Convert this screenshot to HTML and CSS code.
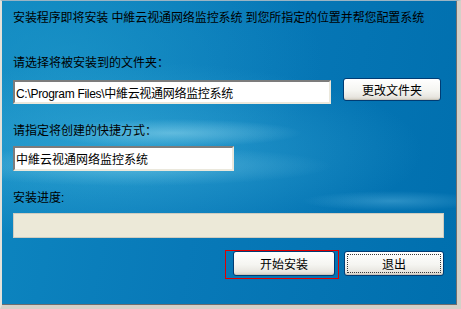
FILE: index.html
```html
<!DOCTYPE html>
<html lang="zh-CN">
<head>
    <meta charset="UTF-8">
    <title>安装</title>
    <link rel="stylesheet" href="styles.css">
</head>
<body>
    <div class="setup-window">
        <p class="intro">安装程序即将安装 中維云视通网络监控系统 到您所指定的位置并帮您配置系统</p>

        <label class="field-label" for="installPath">请选择将被安装到的文件夹：</label>
        <div class="path-row">
            <input type="text" id="installPath" class="text-box path-box" value="C:\Program Files\中維云视通网络监控系统">
            <button class="btn btn-browse">更改文件夹</button>
        </div>

        <label class="field-label label-gap" for="shortcutName">请指定将创建的快捷方式：</label>
        <input type="text" id="shortcutName" class="text-box shortcut-box" value="中維云视通网络监控系统">

        <div class="field-label label-gap">安装进度:</div>
        <div class="progress-bar"></div>

        <div class="action-row">
            <button class="btn btn-start">开始安装</button>
            <button class="btn btn-exit">退出</button>
        </div>
    </div>
</body>
</html>
```

FILE: styles.css
```css
* {
    margin: 0;
    padding: 0;
    box-sizing: border-box;
}

body {
    width: 461px;
    height: 309px;
    overflow: hidden;
    font-family: 'Liberation Sans', 'Noto Sans CJK SC', sans-serif;
    font-size: 12px;
    color: #000;
}

.setup-window {
    width: 461px;
    height: 309px;
    border-top: 1px solid #9ab4c4;
    border-left: 2px solid #e4e2da;
    border-right: 4px solid #d4d0c8;
    border-bottom: 4px solid #d4d0c8;
    box-shadow: inset -1px -1px 0 #6e6e6e;
    padding: 10px 13px 0 11px;
    display: flex;
    flex-direction: column;
    background-color: #0874b6;
    background-image:
        radial-gradient(ellipse 130px 14px at 170px 132px, rgba(170, 230, 245, 0.45), transparent),
        radial-gradient(ellipse 200px 20px at 130px 165px, rgba(150, 220, 240, 0.4), transparent),
        radial-gradient(ellipse 90px 10px at 390px 200px, rgba(120, 200, 235, 0.35), transparent),
        radial-gradient(ellipse 300px 90px at 120px 150px, rgba(60, 175, 218, 0.65), transparent),
        radial-gradient(ellipse 260px 140px at 60px 60px, rgba(30, 150, 200, 0.7), transparent),
        linear-gradient(100deg, #0d86c0 0%, #0879b8 45%, #006fae 100%);
}

.intro {
    line-height: 14px;
    white-space: nowrap;
    letter-spacing: -0.1px;
}

.field-label {
    display: block;
    line-height: 14px;
    margin-top: 31px;
}

.label-gap {
    margin-top: 20px;
}

.text-box {
    font-family: 'Liberation Sans', 'Noto Sans CJK SC', sans-serif;
    font-size: 12px;
    color: #000;
    background: #fff;
    border-top: 2px solid #7c7c7c;
    border-left: 2px solid #7c7c7c;
    border-right: 2px solid #ebe8dc;
    border-bottom: 2px solid #ebe8dc;
    padding: 0 1px;
    outline: none;
}

.path-row {
    display: flex;
    align-items: flex-start;
    margin-top: 8px;
}

.path-box {
    width: 318px;
    height: 24px;
    margin-top: 2px;
    letter-spacing: -0.3px;
}

.shortcut-box {
    width: 221px;
    height: 25px;
    margin-top: 8px;
}

.progress-bar {
    margin-top: 8px;
    height: 25px;
    background: #ece9d8;
    border: 1px solid #cfccc0;
}

.btn {
    font-family: 'Noto Sans CJK SC', sans-serif;
    font-size: 12px;
    color: #000;
    border: 1px solid #003c74;
    border-radius: 3px;
    background: linear-gradient(#ffffff 0%, #f5f5f1 55%, #e8e6e0 85%, #d6d0c5 100%);
    box-shadow: inset 0 -1px 0 #c9c5ba;
}

.btn-browse {
    width: 98px;
    height: 23px;
    margin-left: 12px;
}

.action-row {
    display: flex;
    justify-content: flex-end;
    gap: 9px;
    margin-top: 13px;
}

.btn-start {
    position: relative;
    width: 102px;
    height: 25px;
}

/* red marker box drawn over the start button */
.btn-start::after {
    content: "";
    position: absolute;
    top: -2px;
    left: -9px;
    right: -5px;
    bottom: -4px;
    border: 1px solid #e00000;
}

.btn-exit {
    width: 100px;
    height: 25px;
    outline: 1px dotted #3a3a3a;
    outline-offset: -4px;
}
```
